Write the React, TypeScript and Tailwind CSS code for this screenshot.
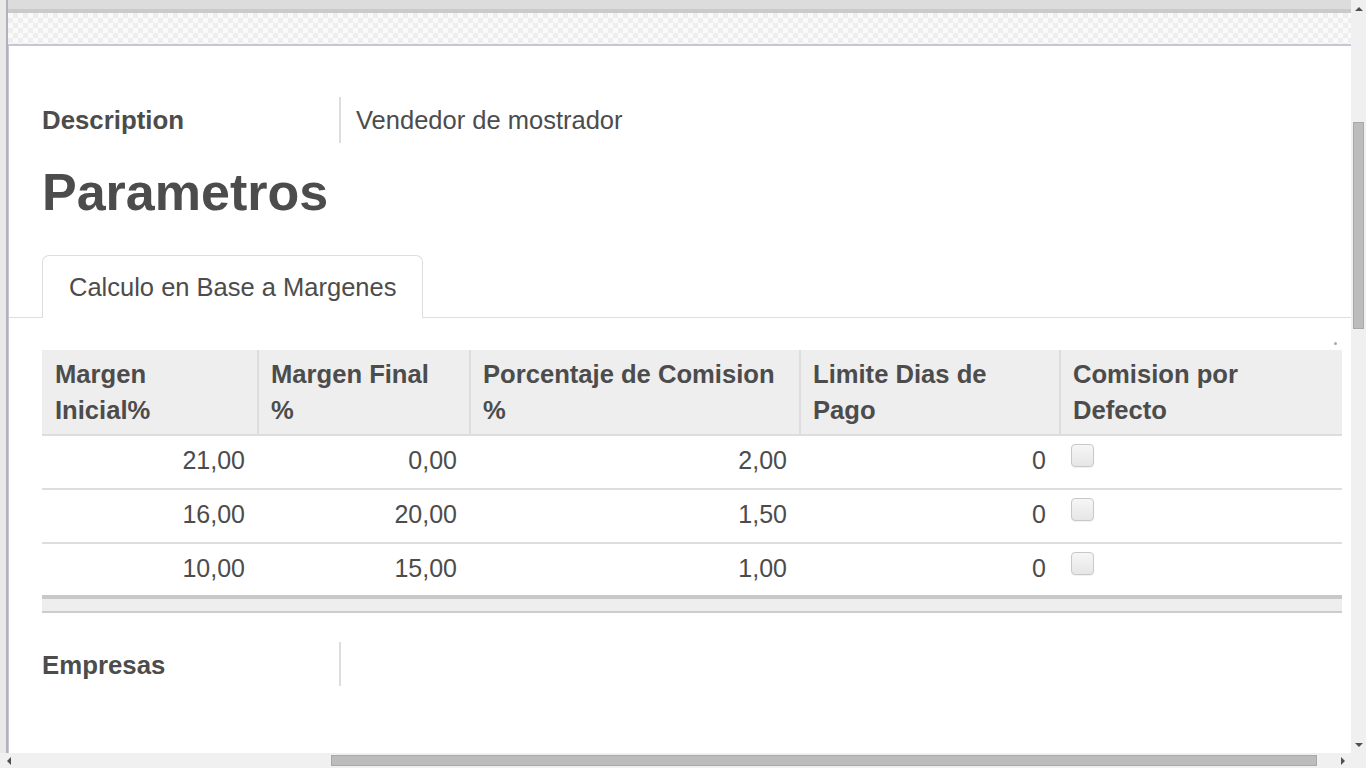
import React from 'react';

const rows = [
  { ini: '21,00', fin: '0,00', pct: '2,00', dias: '0' },
  { ini: '16,00', fin: '20,00', pct: '1,50', dias: '0' },
  { ini: '10,00', fin: '15,00', pct: '1,00', dias: '0' },
];

const cols = 'grid grid-cols-[215px_212px_330px_260px_1fr]';

const Checkbox: React.FC = () => (
  <div className="w-[23px] h-[23px] rounded-[4px] border border-[#c8c8c8] bg-[linear-gradient(#f6f6f6,#e6e6e6)] shadow-[0_1px_1px_rgba(0,0,0,0.06)]" />
);

const App: React.FC = () => {
  return (
    <div className="h-screen w-full flex flex-col overflow-hidden bg-white font-['Liberation_Sans',Arial,sans-serif] text-[#4c4c4c]">
      <div className="flex flex-1 min-h-0">
        {/* left frame */}
        <div className="w-[6px] bg-[#e9e9e9]" />
        <div className="w-[2px] bg-[#b2b2ba]" />

        <div className="flex-1 flex flex-col min-w-0">
          {/* top bars */}
          <div className="h-[9px] bg-[#dcdcdc]" />
          <div className="h-[4px] bg-[#cacaca]" />
          <div className="h-[31px] bg-[image:repeating-conic-gradient(#eeeeee_0_25%,#fafafa_0_50%)] bg-[length:10px_10px]" />
          <div className="h-[2px] bg-[#c8c6d4]" />

          {/* sheet */}
          <div className="flex-1 border-l border-[#c8c6d4] pt-[51px]">
            <div className="pl-[33px] pr-[9px]">
              <div className="flex items-center h-[46px]">
                <div className="w-[297px] text-[25.8px] font-bold">Description</div>
                <div className="h-full border-l-2 border-[#dddddd]" />
                <div className="pl-[15px] text-[25.5px]">Vendedor de mostrador</div>
              </div>
              <h1 className="mt-[20px] text-[52px] leading-[58px] font-bold">Parametros</h1>
            </div>

            {/* tabs */}
            <div className="mt-[34px] border-b border-[#dddddd] pl-[33px] flex">
              <div className="-mb-px h-[63px] px-[26px] flex items-center bg-white border border-b-0 border-[#dddddd] rounded-t-[7px] text-[25.5px]">
                Calculo en Base a Margenes
              </div>
            </div>

            <div className="pl-[33px] pr-[9px]">
              <div className="h-[32px] flex justify-end items-end pb-[5px] pr-[5px]">
                <div className="w-[3px] h-[3px] rounded-full bg-[#aaaaaa]" />
              </div>

              {/* table */}
              <div className="text-[25px] leading-[36px]">
                <div className={`${cols} bg-[#eeeeee] border-b-2 border-[#dddddd] font-bold text-[25.6px]`}>
                  <div className="px-[13px] py-[6px]">Margen<br />Inicial%</div>
                  <div className="border-l-2 border-[#dddddd] px-[12px] py-[6px]">Margen Final<br />%</div>
                  <div className="border-l-2 border-[#dddddd] px-[12px] py-[6px]">Porcentaje de Comision<br />%</div>
                  <div className="border-l-2 border-[#dddddd] px-[12px] py-[6px]">Limite Dias de<br />Pago</div>
                  <div className="border-l-2 border-[#dddddd] px-[12px] py-[6px]">Comision por<br />Defecto</div>
                </div>
                {rows.map((r, i) => (
                  <div
                    key={i}
                    className={`${cols} ${i < rows.length - 1 ? 'h-[54px] border-b-2 border-[#dddddd]' : 'h-[51px]'}`}
                  >
                    <div className="text-right pr-[12px] pt-[6px]">{r.ini}</div>
                    <div className="text-right pr-[12px] pt-[6px]">{r.fin}</div>
                    <div className="text-right pr-[12px] pt-[6px]">{r.pct}</div>
                    <div className="text-right pr-[13px] pt-[6px]">{r.dias}</div>
                    <div className="pl-[12px] pt-[8px]">
                      <Checkbox />
                    </div>
                  </div>
                ))}
                <div className="h-[4px] bg-[#c8c8c8]" />
                <div className="h-[12px] bg-[#eeeeee]" />
                <div className="h-[2px] bg-[#cccccc]" />
              </div>

              <div className="mt-[29px] flex items-center h-[44px]">
                <div className="w-[297px] text-[25.8px] font-bold pt-[2px]">Empresas</div>
                <div className="h-full border-l-2 border-[#dddddd]" />
              </div>
            </div>
          </div>
        </div>

        {/* vertical scrollbar */}
        <div className="w-[15px] bg-[#f0f0f0] flex flex-col">
          <div className="h-[17px] flex items-center justify-center">
            <div className="w-0 h-0 border-x-[4px] border-x-transparent border-b-[4px] border-b-[#505050]" />
          </div>
          <div className="flex-1 px-[2px]">
            <div className="mt-[105px] h-[207px] bg-[#bcbcbc] border border-[#a8a8a8]" />
          </div>
          <div className="h-[17px] flex items-center justify-center">
            <div className="w-0 h-0 border-x-[4px] border-x-transparent border-t-[4px] border-t-[#505050]" />
          </div>
        </div>
      </div>

      {/* horizontal scrollbar */}
      <div className="h-[15px] flex bg-[#f0f0f0]">
        <div className="w-[17px] flex items-center justify-center">
          <div className="w-0 h-0 border-y-[4px] border-y-transparent border-r-[4px] border-r-[#505050]" />
        </div>
        <div className="flex-1 py-[2px]">
          <div className="ml-[314px] w-[986px] h-full bg-[#bcbcbc] border border-[#a8a8a8]" />
        </div>
        <div className="w-[17px] flex items-center justify-center">
          <div className="w-0 h-0 border-y-[4px] border-y-transparent border-l-[4px] border-l-[#505050]" />
        </div>
        <div className="w-[15px] bg-[#f0f0f0]" />
      </div>
    </div>
  );
};

export default App;
